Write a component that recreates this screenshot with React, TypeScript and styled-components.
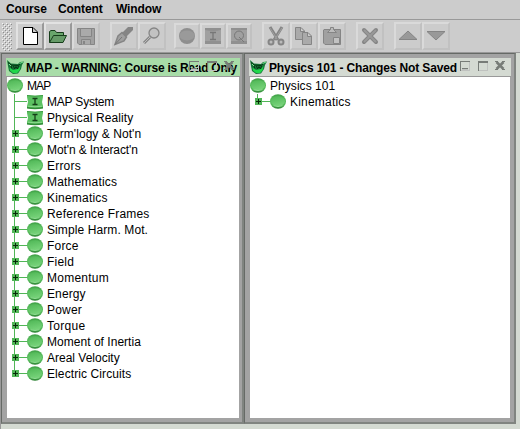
import React from "react";
import styled, { createGlobalStyle } from "styled-components";

const Global = createGlobalStyle`
  * { box-sizing: border-box; }
  html, body { margin: 0; padding: 0; overflow: hidden; }
  body { background: #d4dad2; font-family: "Liberation Sans", Arial, sans-serif; font-size: 12px; color: #000; }
  svg { display: block; flex: none; }
`;

const Screen = styled.div`
  width: 520px;
  height: 429px;
  display: flex;
  flex-direction: column;
  overflow: hidden;
`;
const MenuBar = styled.nav`
  height: 20px;
  flex: none;
  display: flex;
  padding-left: 6px;
  background: #ccc;
  border-bottom: 1px solid #999;
  font-weight: bold;
`;
const MenuItem = styled.span<{ $w: number }>`
  width: ${(p) => p.$w}px;
  line-height: 18px;
  white-space: nowrap;
  letter-spacing: -0.1px;
`;
const ToolBar = styled.div`
  height: 32px;
  flex: none;
  display: flex;
  align-items: center;
  background: #ccc;
  padding-left: 2px;
`;
const Grip = styled.div`
  width: 10px;
  height: 28px;
  margin: 1px 4px 0 0;
  background-image: conic-gradient(from 0deg at 1px 1px, transparent 75%, #f4f4f4 0),
    conic-gradient(from 0deg at 1px 1px, transparent 75%, #f4f4f4 0),
    conic-gradient(from 0deg at 1px 1px, transparent 75%, #8c8c8c 0),
    conic-gradient(from 0deg at 1px 1px, transparent 75%, #8c8c8c 0);
  background-size: 4px 4px;
  background-position: 0 0, 2px 2px, 1px 1px, 3px 3px;
`;
const Group = styled.div<{ $gap: number }>`
  display: flex;
  align-items: center;
  margin-right: ${(p) => p.$gap}px;
`;
const ToolButton = styled.button<{ $on?: boolean; $small?: boolean }>`
  width: ${(p) => (p.$small ? 26 : 28)}px;
  height: ${(p) => (p.$small ? 26 : 28)}px;
  padding: 0;
  display: flex;
  align-items: center;
  justify-content: center;
  background: #ccc;
  border: 2px solid;
  border-color: ${(p) => (p.$on ? "#e2e2e2 #999 #999 #e2e2e2" : "#dadada #c1c1c1 #c1c1c1 #dadada")};
`;
const Desktop = styled.main`
  flex: 1;
  display: flex;
  align-items: flex-start;
  border-top: 1px solid #999;
  border-left: 1px solid #999;
`;
const Frame = styled.section<{ $w: number; $end: number }>`
  width: ${(p) => p.$w}px;
  height: 371px;
  padding: 4px ${(p) => p.$end}px 4px 4px;
  background: #a3a3a3;
  border: 1px solid #666a66;
  border-right: 2px solid #808480;
  border-bottom: 2px solid #808480;
  display: flex;
  flex-direction: column;
`;
const TitleBar = styled.header<{ $active?: boolean }>`
  height: 19px;
  flex: none;
  position: relative;
  display: flex;
  align-items: center;
  padding-left: 1px;
  background: ${(p) => (p.$active ? "#a8dca8" : "#d4dad2")};
  border-bottom: 1px solid #999;
`;
const Title = styled.h1<{ $ls: number }>`
  margin: 1px 0 0 2px;
  font-size: 12px;
  line-height: 18px;
  white-space: nowrap;
  letter-spacing: ${(p) => p.$ls}px;
`;
const WindowControls = styled.div`
  position: absolute;
  right: 6px;
  top: 3px;
  display: flex;
  gap: 8px;

  svg:last-child { margin-left: -1px; }
`;
const Body = styled.div`
  flex: 1;
  margin: 0 1px;
  padding-top: 1px;
  background: #fff;
`;
const Row = styled.div`
  height: 16px;
  display: flex;
`;
const Label = styled.span<{ $ls: number }>`
  margin-left: 4px;
  line-height: 17px;
  white-space: nowrap;
  letter-spacing: ${(p) => p.$ls}px;
`;

const G = "#51b657";

function Ball() {
  return (
    <svg width="16" height="16">
      <defs>
        <linearGradient id="rim" x1="0" y1="0" x2="0" y2="1">
          <stop offset="0" stopColor="#3f9f46" />
          <stop offset="0.3" stopColor="#55b95a" />
          <stop offset="0.75" stopColor="#55b95a" />
          <stop offset="1" stopColor="#277c2e" />
        </linearGradient>
        <linearGradient id="ballFill" x1="0" y1="0" x2="0.3" y2="1">
          <stop offset="0" stopColor="#4fb756" />
          <stop offset="1" stopColor="#76d279" />
        </linearGradient>
      </defs>
      <ellipse cx="8" cy="7.5" rx="8" ry="7.3" fill="url(#rim)" />
      <ellipse cx="8" cy="7.3" rx="7" ry="5" fill="url(#ballFill)" />
      <path d="M3.5 11.6Q8 13.6 12.5 11.6" stroke="#8edb90" fill="none" />
    </svg>
  );
}
function Instruction() {
  return (
    <svg width="16" height="16">
      <path d="M0 1Q8 2.5 16 1V3L15 8L16 12V14Q8 15.5 0 14V12L1 8L0 3Z" fill="#5cc162" />
      <path d="M0 1.5Q8 3 16 1.5" stroke="#3f9f46" fill="none" />
      <path d="M1 12.2Q8 13.4 15 12.2" stroke="#8edb90" fill="none" />
      <path d="M0 13.8Q8 15.3 16 13.8" stroke="#2f8a36" strokeWidth="1.4" fill="none" />
      <path d="M5.5 4.5H10.5M5.5 10.5H10.5M8 4V11" stroke="#143f18" strokeWidth="1.3" />
    </svg>
  );
}
function Branch({ leaf, last }: { leaf?: boolean; last?: boolean }) {
  return (
    <svg width="20" height="16" shapeRendering="crispEdges">
      <path d={last ? "M7.5 0V8" : "M7.5 0V16"} stroke={G} />
      <path d="M8 7.5H20" stroke={G} />
      {!leaf && (
        <>
          <rect x="5" y="4" width="7" height="7" fill={G} />
          <path d="M6 7.5H11M8.5 5V10" stroke="#052908" />
        </>
      )}
    </svg>
  );
}
function Mascot() {
  return (
    <svg width="17" height="18">
      <path d="M0 2L4 5.5L11 6L13 4L17 3.5L15 7L14 11L11 15.5L6 16L2 13L1 8Z" fill="#17763a" />
      <path d="M2.5 9.5L6 12L11 11L13.5 8L12.5 12.5L10 15L6 15L3 12.5Z" fill="#20d84a" />
      <path d="M1 4.5L4 7L11 7.5L13 6M4 8L5 10.5M6.5 8L7.5 11L9 8.5L10.5 11L11.5 8" stroke="#06320f" fill="none" />
      <path d="M12.5 5.5L16 4M2 6L4 8" stroke="#7be48e" fill="none" />
    </svg>
  );
}
function Controls() {
  return (
    <WindowControls>
      <svg width="10" height="10" shapeRendering="crispEdges">
        <path d="M0 .5H10M.5 0V10M2 7.5H8" stroke="#777c77" />
        <path d="M1 9.5H10M9.5 1V10M2 8.5H8" stroke="#bfc2bf" />
      </svg>
      <svg width="10" height="10" shapeRendering="crispEdges">
        <path d="M0 .5H10M0 1.5H10M.5 0V10" stroke="#777c77" />
        <path d="M1 9.5H10M9.5 2V10" stroke="#bfc2bf" />
      </svg>
      <svg width="10" height="10">
        <path d="M1.5 1L8.5 8M8.5 1L1.5 8" stroke="#777c77" strokeWidth="2.5" />
        <path d="M0 .5H3M7 .5H10M0 8.5H3M7 8.5H10" stroke="#777c77" />
      </svg>
    </WindowControls>
  );
}

type ToolName = "new" | "open" | "save" | "pen" | "find" | "ball" | "I" | "Q" | "cut" | "copy" | "paste" | "x" | "up" | "down";
const D = "#858585";
const F = "#a0a0a0";
const drawings: Record<ToolName, React.ReactNode> = {
  new: <path d="M5.5 3.5H15L19.5 8V20.5H5.5ZM14.5 3.5V8.5H19.5" fill="#fff" stroke="#000" />,
  open: (
    <>
      <path d="M3.5 18.5V7.5L5 6.5H9L10.5 8.5H17.5V11.5" fill="#69a66c" stroke="#173e1b" />
      <path d="M3.5 18.5L7.5 11.5H20.5L17 18.5Z" fill="#669b68" stroke="#173e1b" />
    </>
  ),
  save: (
    <>
      <path d="M3.5 4.5H20.5V20.5H5L3.5 19Z" fill={F} stroke={D} />
      <path d="M6.5 4.5H17.5V12.5H6.5ZM7.5 20.5V15.5H16.5V20.5" fill="#aaa" stroke={D} />
      <path d="M9 17H11V20H9Z" fill={D} />
    </>
  ),
  pen: (
    <>
      <path d="M3 20.5L6 12L10 8.5L14.5 13L12 17Z" fill={F} stroke={D} strokeWidth="1.5" />
      <path d="M10 9L16 3H21V6L14 13Z" fill={D} />
      <path d="M3 20.5L10 13" stroke="#777" />
    </>
  ),
  find: (
    <>
      <circle cx="14" cy="9" r="5" fill="#c2c2c2" stroke={D} strokeWidth="1.3" />
      <path d="M10 13L4 19" stroke={D} strokeWidth="3" />
      <path d="M10 13L4 19" stroke="#bbb" />
    </>
  ),
  ball: (
    <>
      <ellipse cx="12" cy="12" rx="8" ry="8" fill="#8e8e8e" />
      <ellipse cx="12" cy="11.5" rx="7.5" ry="5" fill="#9a9a9a" />
    </>
  ),
  I: (
    <>
      <rect x="4" y="4" width="16" height="16" fill="#909090" />
      <path d="M4 6Q12 8 20 6V17H4Z" fill={F} />
      <path d="M9 8.5H15M9 15.5H15M12 8V16" stroke="#777" strokeWidth="1.3" />
    </>
  ),
  Q: (
    <>
      <rect x="4" y="4" width="16" height="16" fill="#909090" />
      <rect x="4" y="6" width="16" height="11" fill={F} />
      <ellipse cx="12" cy="11.5" rx="4.5" ry="4.5" fill="none" stroke="#777" />
      <path d="M12 13L17 18" stroke="#777" />
    </>
  ),
  cut: (
    <>
      <path d="M6 3L14 16M18 3L10 16" stroke={D} strokeWidth="3" />
      <path d="M6 4L13 15M18 4L11 15" stroke={F} />
      <circle cx="7" cy="18" r="2.5" fill="#bbb" stroke={D} strokeWidth="2" />
      <circle cx="17" cy="18" r="2.5" fill="#bbb" stroke={D} strokeWidth="2" />
    </>
  ),
  copy: (
    <>
      <path d="M3.5 3.5H9L12.5 7V15.5H3.5ZM8.5 3.5V7.5H12.5" fill="#aaa" stroke={D} />
      <path d="M10.5 8.5H16L19.5 12V20.5H10.5ZM15.5 8.5V12.5H19.5" fill="#aaa" stroke={D} />
    </>
  ),
  paste: (
    <>
      <path d="M4 5.5H20.5V20.5H5L3.5 19V6Z" fill={F} stroke={D} />
      <path d="M7.5 8.5H16.5L13.5 5.5V3.5H10.5V5.5Z" fill="#bbb" stroke={D} />
      <path d="M13.5 13.5H19.5V19.5H13.5Z" fill="#c2c2c2" stroke={D} />
    </>
  ),
  x: (
    <>
      <path d="M6 6L18 18M18 6L6 18" stroke={D} strokeWidth="4" strokeLinecap="round" />
      <path d="M6 6L18 18M18 6L6 18" stroke="#999" strokeWidth="2" />
    </>
  ),
  up: <path d="M3 15.5L12 7L21 15.5Z" fill="#999" stroke={D} />,
  down: <path d="M3 7.5L12 16L21 7.5Z" fill="#999" stroke={D} />,
};
function Tool({ n }: { n: ToolName }) {
  return (
    <ToolButton $on={n === "new" || n === "open"} $small={n === "ball" || n === "I" || n === "Q"} aria-label={n}>
      <svg width="24" height="24">{drawings[n]}</svg>
    </ToolButton>
  );
}
const groups: { tools: ToolName[]; gap: number }[] = [
  { tools: ["new", "open", "save"], gap: 10 },
  { tools: ["pen", "find"], gap: 8 },
  { tools: ["ball", "I", "Q"], gap: 10 },
  { tools: ["cut", "copy", "paste"], gap: 10 },
  { tools: ["x"], gap: 10 },
  { tools: ["up", "down"], gap: 0 },
];

type Topic = [name: string, spacing: number];
const topics: Topic[] = [
  ["MAP System", -0.2],
  ["Physical Reality", 0.1],
  ["Term'logy & Not'n", 0.05],
  ["Mot'n & Interact'n", -0.1],
  ["Errors", 0.2],
  ["Mathematics", 0.2],
  ["Kinematics", 0.2],
  ["Reference Frames", 0.2],
  ["Simple Harm. Mot.", 0.1],
  ["Force", 0.2],
  ["Field", 0.2],
  ["Momentum", 0.25],
  ["Energy", 0.1],
  ["Power", 0.2],
  ["Torque", 0.3],
  ["Moment of Inertia", 0.03],
  ["Areal Velocity", 0],
  ["Electric Circuits", 0.1],
];

function Tree({ root, items, leaves }: { root: Topic; items: Topic[]; leaves: number }) {
  return (
    <Body>
      <Row>
        <Ball />
        <Label $ls={root[1]}>{root[0]}</Label>
      </Row>
      {items.map(([name, spacing], i) => (
        <Row key={name}>
          <Branch leaf={i < leaves} last={i === items.length - 1} />
          {i < leaves ? <Instruction /> : <Ball />}
          <Label $ls={spacing}>{name}</Label>
        </Row>
      ))}
    </Body>
  );
}

export default function App() {
  return (
    <Screen>
      <Global />
      <MenuBar>
        <MenuItem $w={52}>Course</MenuItem>
        <MenuItem $w={58}>Content</MenuItem>
        <MenuItem $w={60}>Window</MenuItem>
      </MenuBar>
      <ToolBar>
        <Grip />
        {groups.map((g) => (
          <Group key={g.tools[0]} $gap={g.gap}>
            {g.tools.map((n) => <Tool key={n} n={n} />)}
          </Group>
        ))}
      </ToolBar>
      <Desktop>
        <Frame $w={243} $end={2}>
          <TitleBar $active>
            <Mascot />
            <Title $ls={-0.26}>MAP - WARNING: Course is Read Only</Title>
            <Controls />
          </TitleBar>
          <Tree root={["MAP", -0.9]} items={topics} leaves={2} />
        </Frame>
        <Frame $w={272} $end={3}>
          <TitleBar>
            <Mascot />
            <Title $ls={-0.13}>Physics 101 - Changes Not Saved</Title>
            <Controls />
          </TitleBar>
          <Tree root={["Physics 101", 0.05]} items={[["Kinematics", 0.2]]} leaves={0} />
        </Frame>
      </Desktop>
    </Screen>
  );
}
